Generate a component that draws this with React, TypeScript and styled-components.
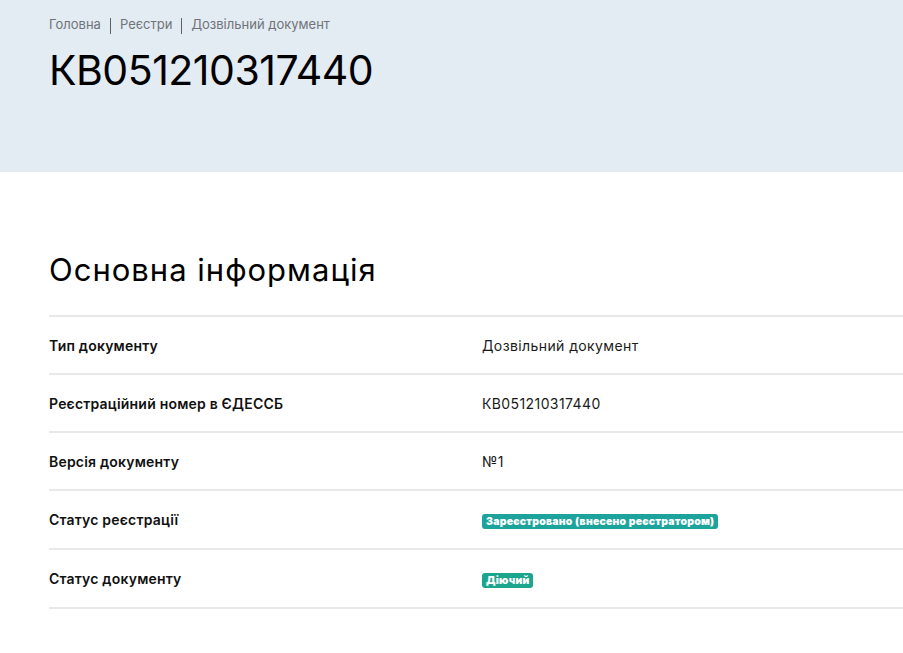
import React from "react";
import styled, {createGlobalStyle} from "styled-components";

const GlobalStyle = createGlobalStyle`
  body {
    margin: 0;
    background: #ffffff;
    font-family: Inter, "Noto Sans", Arial, sans-serif;
    color: #000000;
  }
`

type Row = {
    label: string
    value?: string
    badge?: string
    badgeColor?: string
}

const rows: Row[] = [
    {label: "Тип документу", value: "Дозвільний документ"},
    {label: "Реєстраційний номер в ЄДЕССБ", value: "КВ051210317440"},
    {label: "Версія документу", value: "№1"},
    {label: "Статус реєстрації", badge: "Зареєстровано (внесено реєстратором)", badgeColor: "#1ca49c"},
    {label: "Статус документу", badge: "Діючий", badgeColor: "#1ba58c"},
]

const crumbs = ["Головна", "Реєстри", "Дозвільний документ"]

export default function App() {
    return (
        <>
            <GlobalStyle/>
            <Header>
                <Breadcrumbs>
                    {crumbs.map((c, i) => (
                        <React.Fragment key={c}>
                            {i > 0 && <Separator/>}
                            <Crumb>{c}</Crumb>
                        </React.Fragment>
                    ))}
                </Breadcrumbs>
                <Title>КВ051210317440</Title>
            </Header>
            <Main>
                <SectionTitle>Основна інформація</SectionTitle>
                <Table>
                    {rows.map(r => (
                        <TableRow key={r.label} tall={!!r.badge}>
                            <Label>{r.label}</Label>
                            {r.badge
                                ? <ValueCell><Badge color={r.badgeColor}>{r.badge}</Badge></ValueCell>
                                : <ValueCell>{r.value}</ValueCell>}
                        </TableRow>
                    ))}
                </Table>
            </Main>
        </>
    )
}

const Header = styled.header`
  background: #e3ebf3;
  height: 172px;
  box-sizing: border-box;
  padding: 14px 0 0 49px;
`

const Breadcrumbs = styled.nav`
  display: flex;
  align-items: center;
  gap: 9px;
  font-size: 13px;
  line-height: 18px;
  color: #6f7378;
`

const Crumb = styled.span``

const Separator = styled.span`
  width: 1px;
  height: 16px;
  margin-top: 4px;
  background: #5f6368;
`

const Title = styled.h1`
  margin: 11px 0 0;
  font-size: 41px;
  line-height: 50px;
  font-weight: 400;
  letter-spacing: -0.5px;
`

const Main = styled.main`
  padding: 73px 0 40px 49px;
`

const SectionTitle = styled.h2`
  margin: 0;
  font-size: 31px;
  line-height: 50px;
  font-weight: 400;
  letter-spacing: 1px;
`

const Table = styled.div`
  margin-top: 20px;
  border-top: 2px solid #e8e9eb;
`

const TableRow = styled.div<{ tall?: boolean }>`
  display: grid;
  grid-template-columns: 433px 1fr;
  align-items: center;
  height: ${p => (p.tall ? 57 : 56)}px;
  border-bottom: 2px solid #e8e9eb;
`

const Label = styled.div`
  font-size: 14px;
  font-weight: 600;
  letter-spacing: 0.2px;
  color: #111;
`

const ValueCell = styled.div`
  font-size: 14px;
  letter-spacing: 0.4px;
  color: #1a1a1a;
  display: flex;
  align-items: center;
`

const Badge = styled.span<{ color?: string }>`
  display: inline-block;
  background: ${p => p.color};
  color: #fff;
  font-size: 10.5px;
  font-weight: 900;
  letter-spacing: 0.2px;
  line-height: 15px;
  padding: 0 4px;
  border-radius: 3px;
  margin-top: 3px;
`
